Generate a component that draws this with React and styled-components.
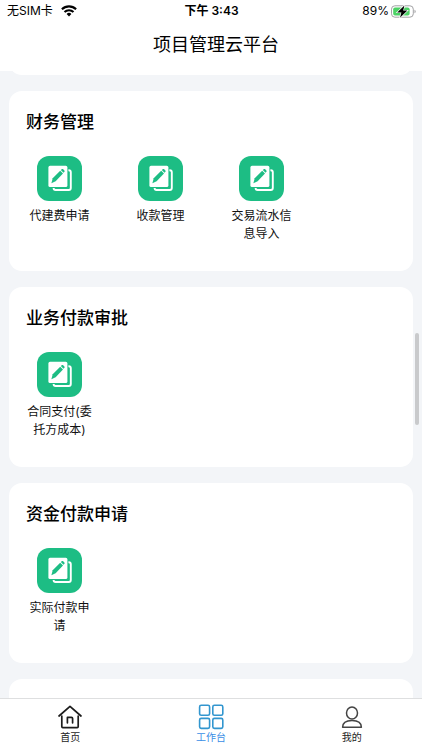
import styled, { createGlobalStyle } from 'styled-components'

const sections = [
  { title: '财务管理', items: ['代建费申请', '收款管理', '交易流水信息导入'] },
  { title: '业务付款审批', items: ['合同支付(委托方成本)'] },
  { title: '资金付款申请', items: ['实际付款申请'] },
];

const WifiIcon = () => (
  <svg width="16" height="12" viewBox="0 0 16 12" fill="none" stroke="#000" strokeWidth="2.1">
    <path d="M0.9 4.3a10.2 10.2 0 0 1 14.2 0" />
    <path d="M3.5 7a6.5 6.5 0 0 1 9 0" />
    <path d="M8 11.4 5.6 9a3.4 3.4 0 0 1 4.8 0z" fill="#000" stroke="none" />
  </svg>
);

const BatteryIcon = () => (
  <svg width="25" height="13" viewBox="0 0 25 13">
    <rect x="0.5" y="0.8" width="21.8" height="11.4" rx="3.4" fill="#fff" stroke="#a2a2a4" />
    <path d="M23.5 4.7c1.6.6 1.6 3 0 3.6z" fill="#a2a2a4" />
    <rect x="2.2" y="2.5" width="16.4" height="8" rx="1.8" fill="#4cd265" />
    <path d="M13.4 0.4 6.2 7.4h4.2L9 12.8l7.4-7.2h-4.2z" fill="#000" stroke="#fff" strokeWidth="1.2" paintOrder="stroke" />
  </svg>
);

const DocIcon = () => (
  <svg width="45" height="45" viewBox="0 0 45 45" fill="none">
    <path d="M31 14.2h.8a2 2 0 0 1 2 2V32a2 2 0 0 1-2 2H18.6a2 2 0 0 1-2-2v-1" stroke="#fff" strokeWidth="1.9" />
    <rect x="10.4" y="9" width="21" height="23" rx="2.2" fill="#1dbd84" />
    <rect x="11.4" y="9.8" width="19" height="21.2" rx="1.6" fill="#fff" />
    <path d="M14.4 27.2l1.3-5 7.5-7.5 2.8 2.8-7.4 7.7z" fill="#1dbd84" />
    <path d="M23.8 14.1l.9-.9c.4-.4 1.1-.4 1.5 0l1.2 1.2c.4.4.4 1 0 1.4l-.9 1z" fill="#1dbd84" />
  </svg>
);

const HomeIcon = () => (
  <svg width="26" height="26" viewBox="0 0 26 26" fill="none" stroke="#1c1c1c" strokeWidth="1.7" strokeLinecap="round" strokeLinejoin="round">
    <path d="M2 12 13 2.4 24 12" />
    <path d="M4.8 12v10.6a1 1 0 0 0 1 1h14.4a1 1 0 0 0 1-1V12" />
    <path d="M10.4 18.8v-5.4h4a1.2 1.2 0 0 1 1.2 1.2v4.2" />
  </svg>
);

const GridIcon = () => (
  <svg width="26" height="26" viewBox="0 0 26 26" fill="none" stroke="#3296cf" strokeWidth="1.6">
    <rect x="1.6" y="1.3" width="10" height="10" rx="1.6" />
    <rect x="14.8" y="1.3" width="10" height="10" rx="1.6" />
    <rect x="1.6" y="14.4" width="10" height="10" rx="1.6" />
    <rect x="14.8" y="14.4" width="10" height="10" rx="1.6" />
  </svg>
);

const UserIcon = () => (
  <svg width="26" height="26" viewBox="0 0 26 26" fill="none" stroke="#444" strokeWidth="1.5" strokeLinejoin="round">
    <ellipse cx="13" cy="9" rx="5.5" ry="6.1" />
    <path d="M3.6 23.2c0-4.2 3.6-6.8 9.4-6.8s9.4 2.6 9.4 6.8z" />
  </svg>
);

const App = () => {
  return (
    <Page>
      <GlobalStyle />
      <StatusBar>
        <Carrier>
          无SIM卡
          <WifiIcon />
        </Carrier>
        <Clock>下午 3:43</Clock>
        <Power>
          89%
          <BatteryIcon />
        </Power>
      </StatusBar>
      <Header>项目管理云平台</Header>
      <Content>
        <PreviousCard />
        {sections.map((section) => (
          <Card key={section.title}>
            <CardTitle>{section.title}</CardTitle>
            <Grid>
              {section.items.map((item) => (
                <Entry key={item} type="button">
                  <EntryIcon><DocIcon /></EntryIcon>
                  <EntryLabel>{item}</EntryLabel>
                </Entry>
              ))}
            </Grid>
          </Card>
        ))}
        <Card />
        <ScrollThumb />
      </Content>
      <TabBar>
        <Tab href="#home"><HomeIcon />首页</Tab>
        <Tab href="#work" $active><GridIcon />工作台</Tab>
        <Tab href="#mine"><UserIcon />我的</Tab>
      </TabBar>
    </Page>
  );
};

const GlobalStyle = createGlobalStyle`
  * {
    box-sizing: border-box;
  }
  body {
    margin: 0;
    font-family: Inter, "Noto Sans CJK SC", sans-serif;
    color: #000;
  }
  svg {
    display: block;
    flex-shrink: 0;
  }
`;

const Page = styled.div`
  display: flex;
  flex-direction: column;
  height: 100vh;
  background: #fff;
`;

const StatusBar = styled.div`
  display: grid;
  grid-template-columns: 1fr auto 1fr;
  align-items: center;
  height: 22px;
  padding: 0 6px 0 7px;
  font-size: 12px;
  line-height: 22px;
`;

const Carrier = styled.div`
  display: flex;
  align-items: center;
  gap: 8px;
`;

const Clock = styled.div`
  font-weight: 600;
`;

const Power = styled.div`
  display: flex;
  align-items: center;
  justify-content: flex-end;
  gap: 2px;
`;

const Header = styled.h1`
  margin: 0;
  height: 49px;
  padding-left: 10px;
  font-size: 18px;
  font-weight: 400;
  line-height: 45px;
  text-align: center;
`;

const Content = styled.main`
  position: relative;
  flex: 1;
  min-height: 0;
  overflow: hidden;
  padding: 0 9px;
  background: #f3f5f8;
`;

const Card = styled.section`
  min-height: 180px;
  margin-bottom: 16px;
  padding: 17px 0;
  border-radius: 13px;
  background: #fff;
`;

// tail of the card that is scrolled under the header
const PreviousCard = styled(Card)`
  margin-top: -176px;
`;

const CardTitle = styled.h2`
  margin: 0 0 20px;
  padding: 0 17px;
  font-size: 17px;
  font-weight: 500;
  line-height: 28px;
`;

const Grid = styled.div`
  display: grid;
  grid-template-columns: repeat(4, 1fr);
`;

const Entry = styled.button`
  display: flex;
  flex-direction: column;
  align-items: center;
  justify-content: flex-start;
  gap: 6px;
  padding: 0 17px;
  border: 0;
  background: none;
  color: #111;
  font-family: inherit;
  font-size: 12px;
  line-height: 18px;
`;

const EntryIcon = styled.span`
  border-radius: 12px;
  background: #1dbd84;
`;

const EntryLabel = styled.span`
  text-align: center;
`;

const ScrollThumb = styled.div`
  position: absolute;
  top: 262px;
  right: 3px;
  width: 4px;
  height: 92px;
  border-radius: 2px;
  background: #c9cacc;
`;

const TabBar = styled.nav`
  display: flex;
  height: 52px;
  border-top: 1px solid #dedfe0;
  background: #fff;
`;

const Tab = styled.a`
  display: flex;
  flex: 1;
  flex-direction: column;
  align-items: center;
  padding-top: 5px;
  color: ${(props) => (props.$active ? '#3a8ee6' : '#1c1c1c')};
  font-size: 10px;
  line-height: 15px;
  text-decoration: none;
`;

export default App;
